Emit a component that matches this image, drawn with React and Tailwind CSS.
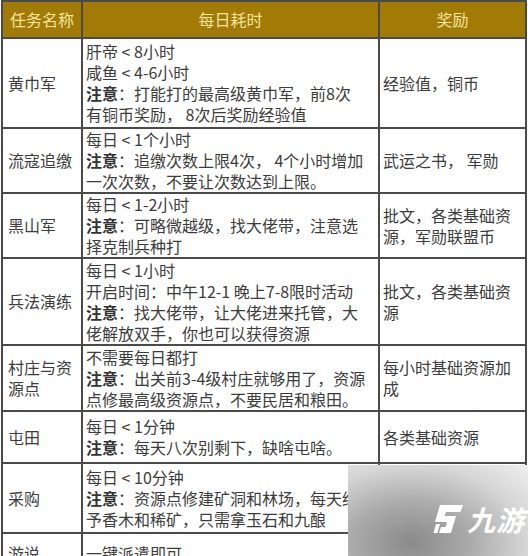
import React from "react";

const rows = [
	{
		name: ["黄巾军"],
		h: "h-[90px]",
		lines: [
			["", "肝帝 < 8小时"],
			["", "咸鱼 < 4-6小时"],
			["注意", "：打能打的最高级黄巾军，前8次"],
			["", "有铜币奖励， 8次后奖励经验值"],
		],
		reward: ["经验值，铜币"],
	},
	{
		name: ["流寇追缴"],
		h: "h-[63px]",
		lines: [
			["", "每日 < 1个小时"],
			["注意", "：追缴次数上限4次， 4个小时增加"],
			["", "一次次数，不要让次数达到上限。"],
		],
		reward: ["武运之书， 军勋"],
	},
	{
		name: ["黑山军"],
		h: "h-[62px]",
		lines: [
			["", "每日 < 1-2小时"],
			["注意", "：可略微越级，找大佬带，注意选"],
			["", "择克制兵种打"],
		],
		reward: ["批文，各类基础资", "源，军勋联盟币"],
	},
	{
		name: ["兵法演练"],
		h: "h-[87px]",
		lines: [
			["", "每日 < 1小时"],
			["", "开启时间：中午12-1 晚上7-8限时活动"],
			["注意", "：找大佬带，让大佬进来托管，大"],
			["", "佬解放双手，你也可以获得资源"],
		],
		reward: ["批文，各类基础资", "源"],
	},
	{
		name: ["村庄与资", "源点"],
		h: "h-[66px]",
		lines: [
			["", "不需要每日都打"],
			["注意", "：出关前3-4级村庄就够用了，资源"],
			["", "点修最高级资源点，不要民居和粮田。"],
		],
		reward: ["每小时基础资源加", "成"],
	},
	{
		name: ["屯田"],
		h: "h-[52px]",
		lines: [
			["", "每日 < 1分钟"],
			["注意", "：每天八次别剩下，缺啥屯啥。"],
		],
		reward: ["各类基础资源"],
	},
	{
		name: ["采购"],
		h: "h-[70px]",
		lines: [
			["", "每日 < 10分钟"],
			["注意", "：资源点修建矿洞和林场，每天给"],
			["", "予香木和稀矿，只需拿玉石和九酿"],
		],
		reward: [],
	},
	{
		name: ["游说"],
		h: "h-[40px]",
		lines: [["", "一键派遣即可"]],
		reward: [],
	},
];

export default function App() {
	return (
		<div className="relative w-[528px] h-[556px] overflow-hidden bg-white font-['Noto_Sans_CJK_SC',sans-serif] text-[16px] leading-[21px] text-[#3c3c3c]">
			<table className="ml-[1px] w-[524px] table-fixed border-collapse">
				<colgroup>
					<col className="w-[80px]" />
					<col className="w-[297px]" />
					<col className="w-[147px]" />
				</colgroup>
				<thead>
					<tr className="h-[37px] bg-[#a27b06] text-[#f3e3a0]">
						<th className="border-2 border-[#4a4a4a] font-normal text-center">任务名称</th>
						<th className="border-2 border-[#4a4a4a] font-normal text-center">每日耗时</th>
						<th className="border-2 border-[#4a4a4a] font-normal text-center">奖励</th>
					</tr>
				</thead>
				<tbody>
					{rows.map((r, i) => (
						<tr key={i} className={r.h}>
							<td className="border-2 border-[#4a4a4a] pl-[5px] align-middle whitespace-nowrap">
								{r.name.map((n, j) => (
									<div key={j}>{n}</div>
								))}
							</td>
							<td className="border-2 border-[#4a4a4a] pl-[3px] align-middle whitespace-nowrap">
								{r.lines.map((l, j) => (
									<div key={j}>
										{l[0] && <span className="font-bold text-[#333]">{l[0]}</span>}
										{l[1]}
									</div>
								))}
							</td>
							<td className="border-2 border-[#4a4a4a] pl-[3px] align-middle whitespace-nowrap">
								{r.reward.map((t, j) => (
									<div key={j}>{t}</div>
								))}
							</td>
						</tr>
					))}
				</tbody>
			</table>

			{/* 九游 watermark */}
			<div className="absolute left-[348px] top-[465px] w-[180px] h-[91px] bg-[radial-gradient(ellipse_at_35%_85%,#8a8a8a_0%,#a9a9a9_35%,#d6d6d6_70%,#efefef_100%)] flex items-center justify-end pr-[3px] pt-[16px]">
				<div className="flex items-center gap-[3px] text-white">
					<svg width="34" height="30" viewBox="0 0 34 30">
						<path d="M10 1 L33 1 L30.5 8 L16 8 L14.5 12 L26 12 L21 29 L9 29 L11 23 L15.5 23 L17 18 L5 18 Z" fill="white" />
						<path d="M6 20 L10 20 L7.5 29 L3.5 29 Z" fill="white" />
					</svg>
					<span className="italic font-bold text-[28px] leading-none tracking-[1px]">九游</span>
				</div>
			</div>
		</div>
	);
}
